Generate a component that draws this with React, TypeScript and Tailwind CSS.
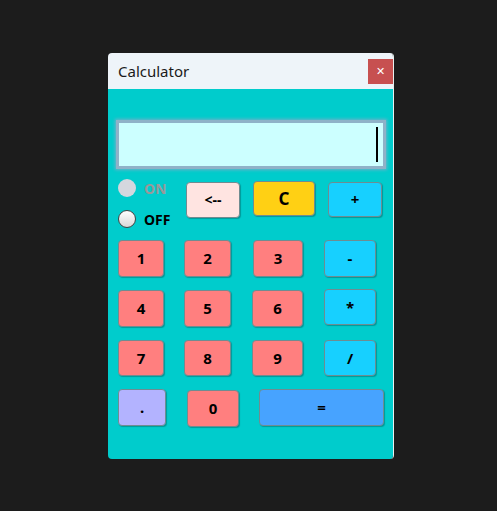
import React from "react";

const font = { fontFamily: '"Noto Sans", "Open Sans", "DejaVu Sans", sans-serif' };

function Btn({ label, cls, w, ml, h = "h-[37px]", t = "text-[15px]" }: { label: string; cls: string; w: string; ml: string; h?: string; t?: string }) {
  return (
    <button
      className={`${cls} ${w} ${ml} ${h} ${t} shrink-0 rounded-[4px] border border-[#6f8c91] shadow-[1px_1px_1px_rgba(0,0,0,0.25)] font-bold text-black flex items-center justify-center leading-none`}
    >
      {label}
    </button>
  );
}

export default function App() {
  const salmon = "bg-[#ff7f7f]";
  const op = "bg-[#17d0ff]";
  return (
    <div className="w-[497px] h-[511px] bg-[#1c1c1c] pt-[53px] pl-[108px]" style={font}>
      <div className="w-[286px] h-[406px] rounded-[4px] overflow-hidden flex flex-col border-r border-[#e8f0f0]">
        <div className="h-[36px] bg-[#eef4f9] flex items-center justify-between shrink-0">
          <span className="ml-[10px] text-[15px] text-[#1a1a1a]">Calculator</span>
          <div className="w-[25px] h-[25px] bg-[#c75050] flex items-center justify-center text-white text-[11px] font-bold">✕</div>
        </div>
        <div className="flex-1 bg-[#00cccc] flex flex-col">
          <div className="ml-[8px] mt-[31px] w-[270px] h-[49px] bg-[#ccffff] border-[3px] border-[#8fb2c8] shadow-[0_0_3px_1px_rgba(140,170,200,0.8)] flex items-center justify-end pr-[5px]">
            <div className="w-[2px] h-[35px] bg-black" />
          </div>
          <div className="flex mt-[12px] h-[37px]">
            <div className="flex flex-col ml-[10px] w-[68px] shrink-0">
              <div className="flex items-center h-[18px] -mt-[2px]">
                <div className="w-[18px] h-[18px] rounded-full bg-[#d5d7de]" />
                <span className="ml-[8px] text-[14px] font-bold text-[#999999]">ON</span>
              </div>
              <div className="flex items-center h-[18px] mt-[13px]">
                <div className="w-[18px] h-[18px] rounded-full border border-[#444] bg-gradient-to-b from-[#ffffff] to-[#d8d8d8]" />
                <span className="ml-[8px] text-[14px] font-bold text-black">OFF</span>
              </div>
            </div>
            <Btn label="<--" cls="bg-[#ffe4e1]" w="w-[54px]" ml="ml-[0px]" h="h-[36px] mt-[1px]" t="text-[14px]" />
            <Btn label="C" cls="bg-[#ffd014]" w="w-[62px]" ml="ml-[13px]" h="h-[35px]" t="text-[17px]" />
            <Btn label="+" cls={op} w="w-[54px]" ml="ml-[13px]" h="h-[35px] mt-[1px]" />
          </div>
          <div className="flex mt-[22px]">
            <Btn label="1" cls={salmon} w="w-[46px]" ml="ml-[10px]" />
            <Btn label="2" cls={salmon} w="w-[47px]" ml="ml-[20px]" />
            <Btn label="3" cls={salmon} w="w-[50px]" ml="ml-[22px]" />
            <Btn label="-" cls={op} w="w-[52px]" ml="ml-[21px]" />
          </div>
          <div className="flex mt-[13px]">
            <Btn label="4" cls={salmon} w="w-[46px]" ml="ml-[10px]" />
            <Btn label="5" cls={salmon} w="w-[47px]" ml="ml-[20px]" />
            <Btn label="6" cls={salmon} w="w-[51px]" ml="ml-[21px]" />
            <Btn label="*" cls={op} w="w-[52px]" ml="ml-[21px]" h="h-[36px] -mt-[1px]" />
          </div>
          <div className="flex mt-[13px]">
            <Btn label="7" cls={salmon} w="w-[46px]" ml="ml-[10px]" h="h-[36px]" />
            <Btn label="8" cls={salmon} w="w-[47px]" ml="ml-[20px]" h="h-[36px]" />
            <Btn label="9" cls={salmon} w="w-[51px]" ml="ml-[21px]" h="h-[36px]" />
            <Btn label="/" cls={op} w="w-[52px]" ml="ml-[21px]" h="h-[36px]" />
          </div>
          <div className="flex mt-[13px]">
            <Btn label="." cls="bg-[#b3b3ff]" w="w-[48px]" ml="ml-[10px]" />
            <Btn label="0" cls={salmon} w="w-[52px]" ml="ml-[21px]" h="h-[37px] mt-[1px]" />
            <Btn label="=" cls="bg-[#47a3ff]" w="w-[125px]" ml="ml-[20px]" />
          </div>
        </div>
      </div>
    </div>
  );
}
